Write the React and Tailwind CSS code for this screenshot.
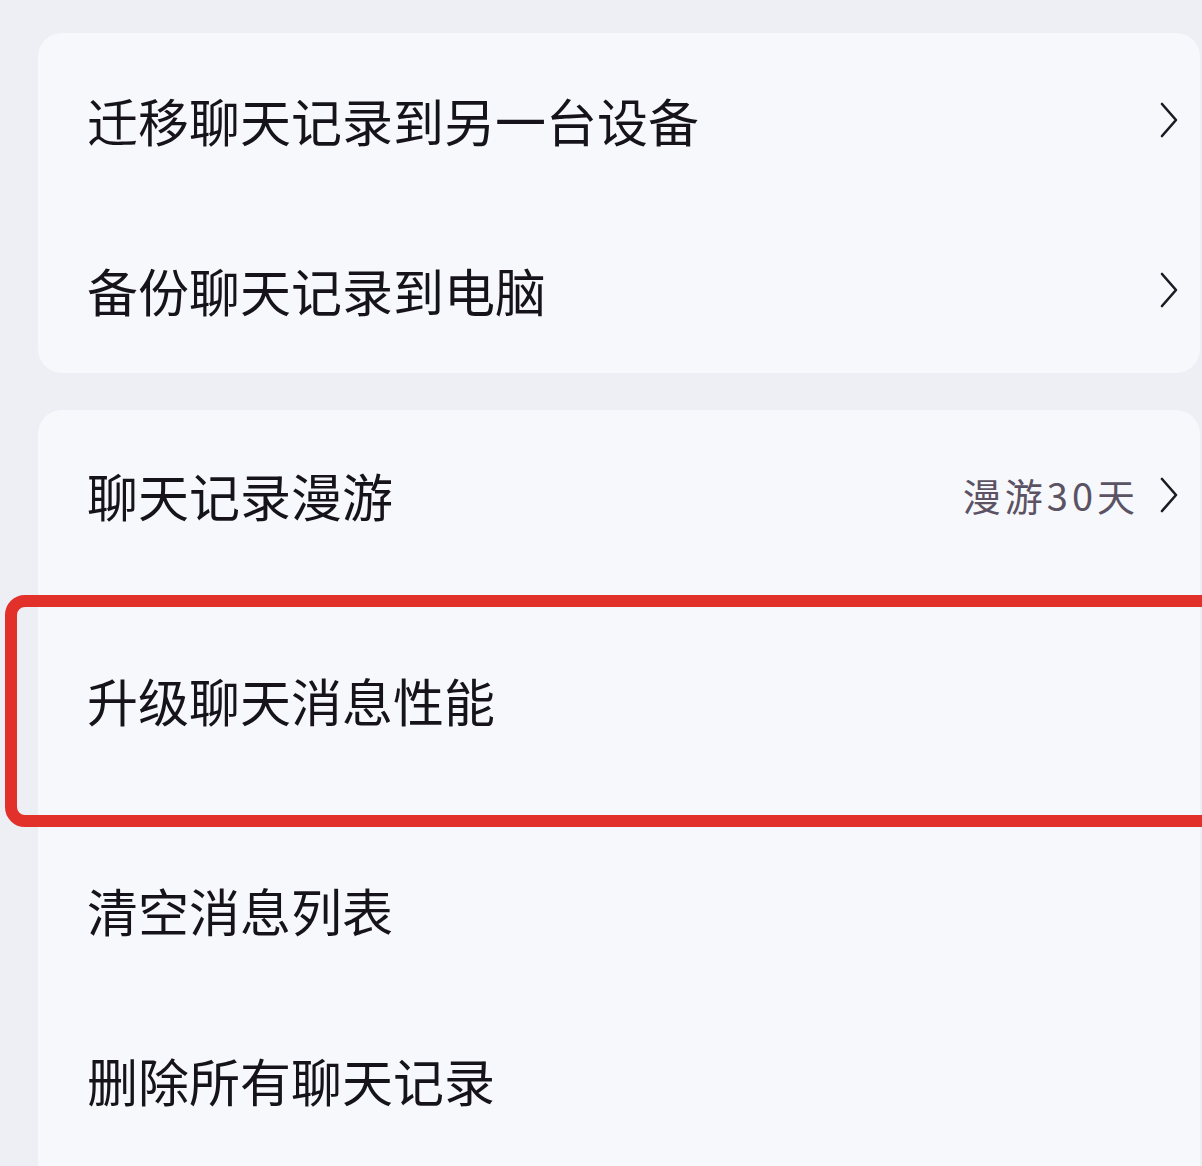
// Chat history settings list

const Chevron = () => (
  <svg width="20" height="36" viewBox="0 0 20 36" fill="none" className="shrink-0">
    <polyline points="3,2 17,18 3,34" stroke="#1c1a22" strokeWidth="2.6" strokeLinecap="round" strokeLinejoin="round" />
  </svg>
);

const Row = ({ label, value, arrow, className = "", children }) => (
  <div className={`relative flex items-center pl-[49px] pr-[21px] ${className}`}>
    <span className="flex-1 text-[51px] leading-none text-[#16141a]">{label}</span>
    {value && <span className="mr-[20px] text-[38px] leading-none tracking-[4px] text-[#5b5364]">{value}</span>}
    {arrow && <Chevron />}
    {children}
  </div>
);

export default function App() {
  return (
    <div
      className="w-[1202px] h-[1166px] overflow-hidden bg-[#edeff5] pt-[33px] pl-[38px] pr-[2px]"
      style={{ fontFamily: '"Noto Sans CJK SC", "Noto Sans", sans-serif' }}
    >
      <div className="rounded-[24px] bg-[#f7f8fc]">
        <Row label="迁移聊天记录到另一台设备" arrow className="h-[174px]" />
        <Row label="备份聊天记录到电脑" arrow className="h-[166px]" />
      </div>

      <div className="mt-[37px] rounded-t-[24px] bg-[#f7f8fc] h-[800px]">
        <Row label="聊天记录漫游" value="漫游30天" arrow className="h-[170px]" />
        <Row label="升级聊天消息性能" className="h-[240px]">
          <div className="absolute left-[-33px] right-[-30px] top-[15px] bottom-[-7px] rounded-[20px] border-[12px] border-[#e2302b]" />
        </Row>
        <Row label="清空消息列表" className="h-[180px]" />
        <Row label="删除所有聊天记录" className="h-[160px]" />
      </div>
    </div>
  );
}
